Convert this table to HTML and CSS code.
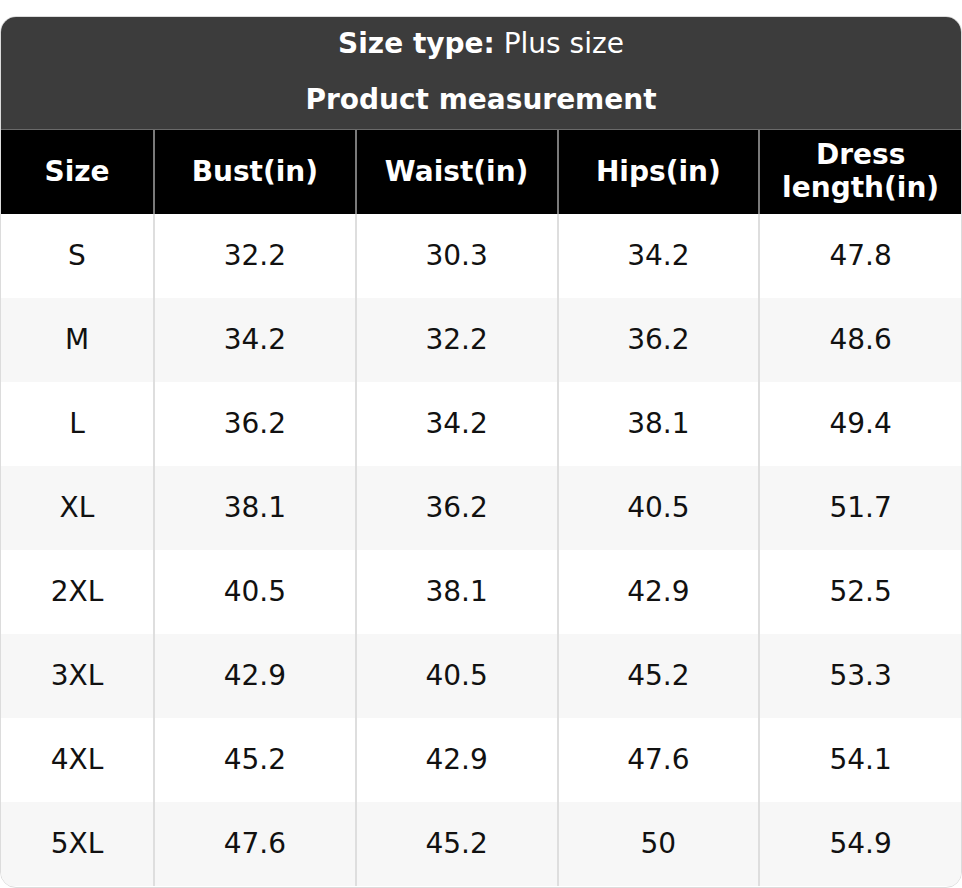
FILE: index.html
```html
<!DOCTYPE html>
<html>
<head>
<meta charset="utf-8">
<link rel="stylesheet" href="styles.css">
</head>
<body>
<div class="card">
  <div class="titles">
    <div class="title-line"><b>Size type:</b> Plus size</div>
    <div class="title-line"><b>Product measurement</b></div>
  </div>
  <table class="chart">
    <colgroup>
      <col class="c-size"><col><col><col><col>
    </colgroup>
    <thead>
      <tr><th>Size</th><th>Bust(in)</th><th>Waist(in)</th><th>Hips(in)</th><th>Dress<br>length(in)</th></tr>
    </thead>
    <tbody>
      <tr><td>S</td><td>32.2</td><td>30.3</td><td>34.2</td><td>47.8</td></tr>
      <tr><td>M</td><td>34.2</td><td>32.2</td><td>36.2</td><td>48.6</td></tr>
      <tr><td>L</td><td>36.2</td><td>34.2</td><td>38.1</td><td>49.4</td></tr>
      <tr><td>XL</td><td>38.1</td><td>36.2</td><td>40.5</td><td>51.7</td></tr>
      <tr><td>2XL</td><td>40.5</td><td>38.1</td><td>42.9</td><td>52.5</td></tr>
      <tr><td>3XL</td><td>42.9</td><td>40.5</td><td>45.2</td><td>53.3</td></tr>
      <tr><td>4XL</td><td>45.2</td><td>42.9</td><td>47.6</td><td>54.1</td></tr>
      <tr><td>5XL</td><td>47.6</td><td>45.2</td><td>50</td><td>54.9</td></tr>
    </tbody>
  </table>
</div>
</body>
</html>
```
FILE: styles.css
```css
html, body {
  margin: 0;
  padding: 0;
  background: #fff;
}
body {
  padding-top: 16px;
  font-family: "DejaVu Sans", "Liberation Sans", sans-serif;
  font-size: 28px;
  color: #111;
}
.card {
  width: 962px;
  height: 872px;
  box-sizing: border-box;
  border: 1px solid #dcdcdc;
  border-radius: 16px;
  overflow: hidden;
  background: #fff;
}
.titles {
  background: #3c3c3c;
  color: #fff;
  border-bottom: 1px solid #6a6a6a;
}
.title-line {
  height: 56px;
  line-height: 54px;
  text-align: center;
}
.title-line b {
  font-weight: bold;
}
.chart {
  width: 100%;
  table-layout: fixed;
  border-collapse: collapse;
}
.c-size {
  width: 153px;
}
.chart th {
  background: #000;
  color: #fff;
  font-weight: bold;
  height: 84px;
  padding: 0 0 2px;
  line-height: 33px;
  text-align: center;
  border-left: 2px solid #7a7a7a;
  box-sizing: border-box;
}
.chart td {
  height: 84px;
  padding: 0 0 2px;
  text-align: center;
  border-left: 2px solid #dedede;
  box-sizing: border-box;
}
.chart th:first-child,
.chart td:first-child {
  border-left: none;
}
.chart tbody tr:nth-child(even) td {
  background: #f7f7f7;
}
```
